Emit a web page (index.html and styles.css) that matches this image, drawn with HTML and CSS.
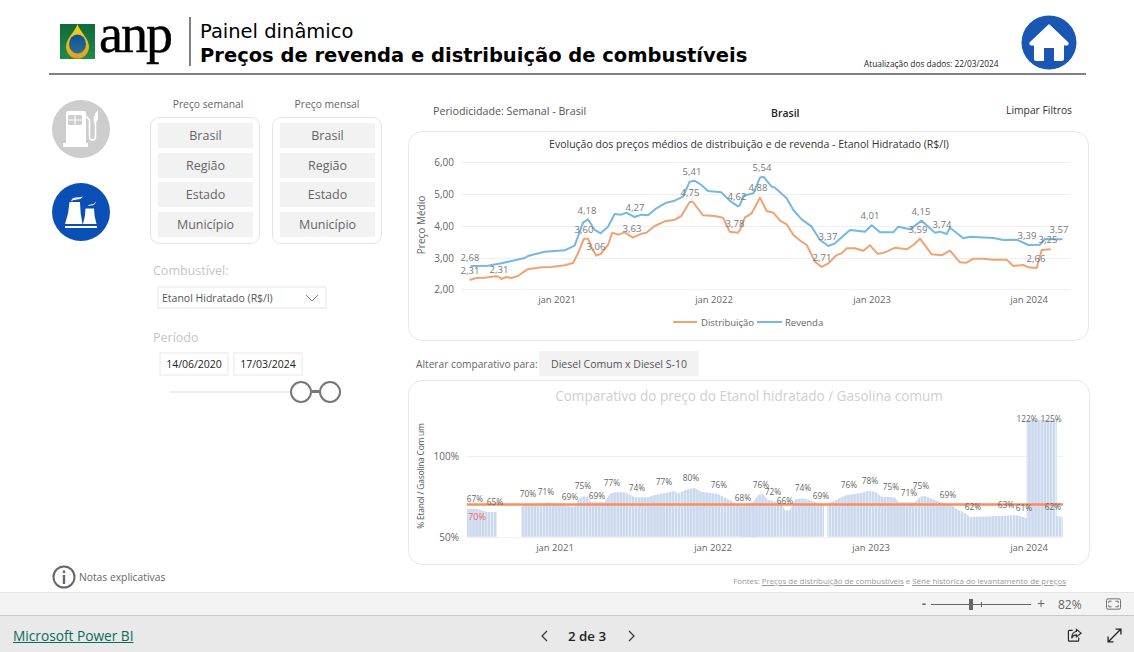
FILE: index.html
```html
<!DOCTYPE html>
<html lang="pt-BR">
<head>
<meta charset="utf-8">
<title>Painel dinâmico</title>
<link rel="stylesheet" href="styles.css">
</head>
<body>
<div class="report">
  <header class="top">
    <svg class="flag" viewBox="0 0 35 35" aria-hidden="true">
      <defs>
        <linearGradient id="gGreen" x1="0" y1="0" x2="0" y2="1"><stop offset="0" stop-color="#0f6b38"/><stop offset="1" stop-color="#1f8a4a"/></linearGradient>
        <linearGradient id="gGold" x1="0" y1="0" x2="0" y2="1"><stop offset="0" stop-color="#f4d21f"/><stop offset="1" stop-color="#e0a020"/></linearGradient>
        <linearGradient id="gBlue" x1="0" y1="0" x2="0" y2="1"><stop offset="0" stop-color="#0d4f96"/><stop offset="1" stop-color="#2d6f90"/></linearGradient>
      </defs>
      <rect width="35" height="35" fill="url(#gGreen)"/>
      <path d="M17.5 0C15 8 6 14 6 23a11.500 11.500 0 0 0 23 0C29 14 20 8 17.500 0z" fill="url(#gGold)"/>
      <ellipse cx="17.500" cy="20" rx="8.500" ry="9.500" fill="url(#gBlue)"/>
    </svg>
    <span class="anp">anp</span>
    <span class="divider"></span>
    <div class="titles">
      <div class="title-light">Painel dinâmico</div>
      <div class="title-bold">Preços de revenda e distribuição de combustíveis</div>
    </div>
    <span class="updated">Atualização dos dados: 22/03/2024</span>
    <svg class="home" viewBox="0 0 56 55" aria-hidden="true">
      <ellipse cx="28" cy="27.500" rx="27.500" ry="27" fill="#1a56b4"/>
      <path d="M28 9 L47 27 a2 2 0 0 1 -1.500 3.500 H43 V44 a2 2 0 0 1 -2 2 H33 V33 H23 V46 H15 a2 2 0 0 1 -2 -2 V30.500 H10.500 A2 2 0 0 1 9 27 Z" fill="#fff"/>
    </svg>
  </header>

  <div class="content">
    <aside class="side">
      <div class="side-top">
        <div class="rail">
          <svg class="round" viewBox="0 0 58 58" aria-hidden="true">
            <circle cx="29" cy="29" r="29" fill="#cdcdcd"/>
            <path d="M14 13 q0 -2 2 -2 h16 q2 0 2 2 v30 h2 v4 H11 v-4 h3 z" fill="#fff"/>
            <rect x="16" y="15" width="14" height="10" rx="1.500" fill="#cdcdcd"/>
            <path d="M23 15v10M16 20h14" stroke="#fff" stroke-width="1.200"/>
            <path d="M34 16 l3.500 4 v16 q0 4 3 4 t3 -4 V24 l-1 -2 v-6" fill="none" stroke="#fff" stroke-width="1.600"/>
            <path d="M44 23 l-2 -4 1.500 -6 2.500 -3 v9 z" fill="#fff"/>
          </svg>
          <svg class="round" viewBox="0 0 58 58" aria-hidden="true">
            <circle cx="29" cy="29" r="29" fill="#0a4fb5"/>
            <path d="M17.500 19 h10.500 q0 11 2.500 22 H13 q4 -11 4.500 -22z M33.500 25.500 h8.500 q0 8 2.500 15.500 H31 q2.500 -7.500 2.500 -15.500z" fill="#fff"/>
            <path d="M13 43 h32 v2 H13z" fill="#fff"/>
            <path d="M19 18.500 q1 -4 5 -4 t7 -1 q-2 3 -6 3 t-6 2z M35 24.500 q1 -3 4 -3 t5 -3 q-1 4 -5 4 t-4 2z" fill="#fff"/>
          </svg>
        </div>
        <div class="filters">
          <div class="filter-grid">
            <section class="filter-col">
              <div class="col-label">Preço semanal</div>
              <div class="btn-box">
                <div class="btn">Brasil</div><div class="btn">Região</div><div class="btn">Estado</div><div class="btn">Município</div>
              </div>
            </section>
            <section class="filter-col">
              <div class="col-label">Preço mensal</div>
              <div class="btn-box">
                <div class="btn">Brasil</div><div class="btn">Região</div><div class="btn">Estado</div><div class="btn">Município</div>
              </div>
            </section>
          </div>
          <div class="field-label first">Combustível:</div>
          <div class="select">
            <span>Etanol Hidratado (R$/l)</span>
            <svg class="chev" viewBox="0 0 14 8" aria-hidden="true"><path d="M1 1l6 6 6-6" fill="none" stroke="#777" stroke-width="1"/></svg>
          </div>
          <div class="field-label second">Período</div>
          <div class="dates"><div class="date">14/06/2020</div><div class="date">17/03/2024</div></div>
          <div class="slider">
            <span class="thumb"></span><span class="bridge"></span><span class="thumb"></span>
          </div>
        </div>
      </div>
      <div class="notes">
        <svg class="info" viewBox="0 0 24 24" aria-hidden="true">
          <circle cx="12" cy="12" r="10.500" fill="none" stroke="#666" stroke-width="2"/>
          <rect x="10.800" y="10" width="2.400" height="9" fill="#666"/><rect x="10.800" y="5.500" width="2.400" height="2.600" fill="#666"/>
        </svg>
        <span>Notas explicativas</span>
      </div>
    </aside>

    <main class="main">
      <div class="info-row">
        <span class="period">Periodicidade: Semanal - Brasil</span>
        <span class="region">Brasil</span>
        <span class="clear">Limpar Filtros</span>
      </div>

      <section class="card card-line">
        <svg class="chart" viewBox="409 132 679 208" role="img">
          <text class="t-title" x="749" y="148">Evolução dos preços médios de distribuição e de revenda - Etanol Hidratado (R$/l)</text>
          <g class="grid">
            <line x1="461" x2="1070" y1="162.500" y2="162.500"/><line x1="461" x2="1070" y1="194.500" y2="194.500"/>
            <line x1="461" x2="1070" y1="226.500" y2="226.500"/><line x1="461" x2="1070" y1="258.500" y2="258.500"/>
            <line x1="461" x2="1070" y1="289.500" y2="289.500"/>
          </g>
          <g class="axis-y">
            <text x="454" y="166">6,00</text><text x="454" y="198">5,00</text><text x="454" y="230">4,00</text><text x="454" y="262">3,00</text><text x="454" y="293">2,00</text>
          </g>
          <text class="axis-title" transform="translate(425 225) rotate(-90)">Preço Médio</text>
          <g class="axis-x">
            <text x="557" y="303">jan 2021</text><text x="714" y="303">jan 2022</text><text x="872" y="303">jan 2023</text><text x="1029" y="303">jan 2024</text>
          </g>
          <g transform="translate(408 130) scale(.33333)">
            <polyline class="l-blue" points="190,408 240,407 280,400 350,384 360,378 410,365 470,361 500,347 525,278 540,268 560,300 578,310 600,290 620,252 640,254 655,248 680,261 700,254 720,256 745,235 775,218 800,212 825,200 845,155 860,152 880,165 900,183 940,187 965,212 990,229 996,225"/>
            <polyline class="l-orange" points="187,449 205,444 230,443 262,439 272,440 280,447 295,441 310,444 330,438 358,418 400,412 430,411 470,406 495,399 510,370 528,326 540,326 552,355 565,377 578,372 600,345 613,308 630,314 650,307 675,323 700,311 715,308 740,288 770,274 800,269 820,258 845,216 855,216 885,256 920,258 945,263 965,305 990,308 996,300"/>
          </g>
          <g transform="translate(740 130) scale(.33333)">
            <polyline class="l-blue" points="0,225 10,197 40,190 60,143 70,140 95,170 105,173 140,205 160,240 185,268 215,290 240,330 265,348 285,340 330,300 375,305 395,286 420,307 460,307 475,290 510,298 545,272 585,308 600,305 620,312 630,293 670,325 690,320 760,324 790,330 830,329 865,345 900,344 915,327 965,328"/>
            <polyline class="l-orange" points="0,300 15,262 35,250 60,203 80,243 100,248 120,272 140,283 160,315 185,335 200,345 225,395 245,411 265,400 290,375 305,370 320,355 345,355 370,362 390,346 412,371 425,370 440,365 465,353 500,358 520,345 540,326 575,373 605,376 630,362 660,397 680,398 700,386 730,386 760,389 800,389 820,408 850,405 865,412 890,414 905,360 930,358"/>
          </g>
          <g class="labels">
            <text x="470" y="261">2,68</text><text x="470" y="274">2,31</text><text x="499" y="273">2,31</text>
            <text x="587" y="214">4,18</text><text x="584" y="233">3,60</text><text x="596" y="250">3,06</text>
            <text x="635" y="211">4,27</text><text x="632" y="232">3,63</text><text x="692" y="175">5,41</text>
            <text x="690" y="196">4,75</text><text x="737" y="200">4,62</text><text x="735" y="227">3,78</text>
            <text x="762" y="171">5,54</text><text x="758" y="191">4,88</text><text x="828" y="240">3,37</text>
            <text x="822" y="261">2,71</text><text x="870" y="219">4,01</text><text x="921" y="215">4,15</text>
            <text x="918" y="233">3,59</text><text x="942" y="228">3,74</text><text x="1027" y="239">3,39</text>
            <text x="1048" y="243">3,25</text><text x="1059" y="233">3,57</text><text x="1036" y="262">2,66</text>
          </g>
          <line class="leg-o" x1="673" x2="697" y1="322" y2="322"/>
          <text class="legend" x="701" y="326">Distribuição</text>
          <line class="leg-b" x1="757" x2="782" y1="322" y2="322"/>
          <text class="legend" x="785" y="326">Revenda</text>
        </svg>
      </section>

      <div class="compare-row">
        <span class="compare-label">Alterar comparativo para:</span>
        <span class="compare-btn">Diesel Comum x Diesel S-10</span>
      </div>

      <section class="card card-bars">
        <svg class="chart" viewBox="409 381 680 183" role="img">
          <defs>
            <pattern id="barsL" patternUnits="userSpaceOnUse" width="9.200" height="30"><rect width="7.800" height="30" fill="#cbd8ee"/><rect x="7.800" width="1.400" height="30" fill="#e6ecf7"/></pattern>
          </defs>
          <text class="t-title2" x="749" y="401">Comparativo do preço do Etanol hidratado / Gasolina comum</text>
          <g class="grid">
            <line x1="467" x2="1063" y1="456.500" y2="456.500"/><line x1="467" x2="1063" y1="537.500" y2="537.500"/>
          </g>
          <g class="axis-y2"><text x="459" y="460">100%</text><text x="459" y="541">50%</text></g>
          <text class="axis-title2" transform="translate(424 476) rotate(-90)">% Etanol / Gasolina Com um</text>
          <g transform="translate(408 345) scale(.33333)">
            <path fill="url(#barsL)" d="M177 575V491L205 491 225 497 240 501 267 501V575Z"/>
            <path fill="url(#barsL)" d="M340 575V486L350 480 400 476 420 472 470 482 500 485 513 460 525 454 540 455 550 472 590 472 605 447 620 442 650 442 680 457 720 457 740 450 800 438 810 446 830 436 860 428 880 440 930 447 965 465 1005 487 1030 482 1050 465V575Z"/>
          </g>
          <g transform="translate(740 345) scale(.33333)">
            <path fill="url(#barsL)" d="M54 575V450L68 447 85 465 125 473 135 497 150 495 165 463 190 460 230 472 252 482V575Z"/>
            <path fill="url(#barsL)" d="M0 575V485L40 470 54 450V575Z"/>
            <path fill="url(#barsL)" d="M262 575V475L290 465 300 458 320 450 360 445 385 437 405 440 425 455 465 457 475 472 525 472 540 455 555 453 590 467 640 483 650 492 680 507 690 516 780 513 830 511 860 520V225H950V513L968 516V575Z"/>
          </g>
          <line class="target" x1="467" x2="1063" y1="504.500" y2="504.500"/>
          <g class="pct">
            <text x="475" y="502">67%</text><text x="495" y="505">65%</text><text x="528" y="497">70%</text><text x="546" y="495">71%</text>
            <text x="570" y="500">69%</text><text x="583" y="489">75%</text><text x="597" y="499">69%</text><text x="612" y="486">77%</text>
            <text x="637" y="491">74%</text><text x="664" y="485">77%</text><text x="691" y="481">80%</text><text x="719" y="488">76%</text>
            <text x="743" y="501">68%</text><text x="761" y="488">76%</text><text x="773" y="495">72%</text><text x="785" y="504">66%</text>
            <text x="803" y="491">74%</text><text x="821" y="499">69%</text><text x="849" y="488">76%</text><text x="870" y="484">78%</text>
            <text x="891" y="490">75%</text><text x="909" y="496">71%</text><text x="921" y="489">75%</text><text x="948" y="498">69%</text>
            <text x="973" y="510">62%</text><text x="1006" y="508">63%</text><text x="1024" y="511">61%</text><text x="1027" y="422">122%</text>
            <text x="1051" y="422">125%</text><text x="1053" y="510">62%</text>
          </g>
          <text class="pct-red" x="477" y="520">70%</text>
          <g class="axis-x">
            <text x="555" y="551">jan 2021</text><text x="713" y="551">jan 2022</text><text x="871" y="551">jan 2023</text><text x="1029" y="551">jan 2024</text>
          </g>
        </svg>
      </section>

      <div class="sources">Fontes: <u>Preços de distribuição de combustíveis</u> e <u>Série histórica do levantamento de preços</u></div>
    </main>
  </div>
</div>

<div class="zoombar">
  <span class="z-minus">-</span>
  <span class="z-track"><span class="z-thumb"></span><span class="z-tick"></span></span>
  <span class="z-plus">+</span>
  <span class="z-pct">82%</span>
  <svg class="z-fit" viewBox="0 0 16 12" aria-hidden="true">
    <rect x=".5" y=".5" width="15" height="11" rx="1.500" fill="none" stroke="#666"/>
    <path d="M3 5V3h3M13 5V3h-3M3 7v2h3M13 7v2h-3" fill="none" stroke="#666"/>
  </svg>
</div>
<footer class="nav">
  <a class="pbi">Microsoft Power BI</a>
  <div class="pager">
    <svg class="pg-chev" viewBox="0 0 8 12" aria-hidden="true"><path d="M7 1L2 6l5 5" fill="none" stroke="#333" stroke-width="1.200"/></svg>
    <span class="pg-text">2 de 3</span>
    <svg class="pg-chev" viewBox="0 0 8 12" aria-hidden="true"><path d="M1 1l5 5-5 5" fill="none" stroke="#333" stroke-width="1.200"/></svg>
  </div>
  <svg class="act share" viewBox="0 0 16 16" aria-hidden="true">
    <path d="M6 2.500H2.500a1 1 0 0 0-1 1v9.500a1 1 0 0 0 1 1h9a1 1 0 0 0 1-1v-3" fill="none" stroke="#222" stroke-width="1.200"/>
    <path d="M10 1.500l5 4-5 4V7.300C7.500 7.300 6 8.500 5 11c0-4 1.800-6.800 5-7.200z" fill="none" stroke="#222" stroke-width="1.200"/>
  </svg>
  <svg class="act expand" viewBox="0 0 14 14" aria-hidden="true">
    <path d="M1 13L13 1M8 1h5v5M1 8v5h5" fill="none" stroke="#222" stroke-width="1.200"/>
  </svg>
</footer>
</body>
</html>
```
FILE: styles.css
```css
* { box-sizing: border-box; }
html, body { margin: 0; padding: 0; }
body { width: 1134px; height: 652px; overflow: hidden; background: #fff; font-family: "Open Sans", "Noto Sans", sans-serif; color: #555; display: flex; flex-direction: column; }

.report { height: 592px; display: flex; flex-direction: column; flex: none; }

.top { flex: none; height: 75px; width: 1037px; margin-left: 49px; border-bottom: 2px solid #808080; display: flex; align-items: flex-start; }
.flag { width: 35px; height: 35px; margin: 24px 0 0 11px; flex: none; }
.anp { font-family: "Liberation Serif", serif; font-size: 54px; line-height: 52px; letter-spacing: -2px; color: #000; margin: 8px 0 0 4px; width: 90px; flex: none; -webkit-text-stroke: 0.4px #000; }
.divider { width: 2px; height: 49px; background: #808080; margin-top: 17px; flex: none; }
.titles { margin: 20px 0 0 9px; width: 664px; flex: none; color: #000; font-family: "DejaVu Sans", sans-serif; }
.title-light { font-size: 19.500px; line-height: 24px; }
.title-bold { font-size: 19.500px; line-height: 23px; font-weight: 700; white-space: nowrap; }
.updated { font-size: 8.300px; color: #222; margin-top: 58px; width: 157px; flex: none; white-space: nowrap; line-height: 12px; }
.home { width: 56px; height: 55px; margin-top: 15px; flex: none; }

.content { flex: 1; display: flex; min-height: 0; }
.side { width: 359px; margin-left: 49px; flex: none; display: flex; flex-direction: column; }
.side-top { display: flex; }
.rail { width: 101px; padding: 25px 0 0 3px; display: flex; flex-direction: column; gap: 25px; flex: none; }
.round { width: 58px; height: 58px; display: block; }

.filters { width: 240px; flex: none; }
.filter-grid { display: flex; gap: 12px; }
.filter-col { width: 110px; }
.col-label { height: 42px; padding-top: 21px; text-align: center; font-size: 10.300px; line-height: 16px; color: #666; white-space: nowrap; }
.filter-col:first-child .col-label { padding-left: 6px; }
.btn-box { height: 127px; border: 1px solid #e4e4e4; border-radius: 9px; padding: 5px 6px 0 7px; display: grid; grid-auto-rows: 25px; row-gap: 4.500px; }
.btn { background: #f2f2f2; text-align: center; font-size: 12.500px; line-height: 25px; color: #666; }

.field-label { font-size: 12.500px; line-height: 18px; color: #c6c6c6; margin-left: 3px; }
.field-label.first { margin-top: 18px; }
.field-label.second { margin-top: 20px; }
.select { width: 170px; height: 23px; margin: 6px 0 0 7px; border: 2px solid #f3f3f3; display: flex; align-items: center; justify-content: space-between; padding: 0 6px 0 3px; font-size: 10.500px; color: #555; white-space: nowrap; }
.chev { width: 14px; height: 8px; }
.dates { display: flex; gap: 4px; margin: 5px 0 0 9px; }
.date { width: 70px; height: 24px; border: 2px solid #f3f3f3; font-size: 10.500px; line-height: 20px; text-align: center; color: #222; }
.slider { position: relative; height: 2px; width: 140px; margin: 15px 0 0 20px; background: #eee; }
.thumb { position: absolute; top: -10px; width: 22px; height: 22px; border: 2px solid #777; border-radius: 50%; background: #fff; }
.thumb:first-child { left: 120px; }
.thumb:last-child { left: 149px; }
.bridge { position: absolute; top: -1px; left: 142px; width: 7px; height: 3px; background: #777; }

.notes { margin: auto 0 3px 3px; height: 24px; display: flex; align-items: center; gap: 3px; font-size: 10.300px; color: #666; white-space: nowrap; }
.info { width: 24px; height: 24px; flex: none; }

.main { width: 682px; flex: none; display: flex; flex-direction: column; }
.info-row { height: 56px; display: grid; grid-template-columns: 338px 30px 1fr; padding: 26px 18px 0 25px; font-size: 10.500px; color: #444; white-space: nowrap; }
.period { line-height: 20px; color: #555; font-size: 10.700px; }
.region { line-height: 24px; color: #222; font-weight: 600; }
.clear { line-height: 18px; text-align: right; color: #333; font-size: 10.300px; }

.card { border: 1px solid #e8e8e8; border-radius: 14px; overflow: hidden; }
.card-line { width: 681px; height: 210px; }
.card-bars { width: 682px; height: 185px; }
.chart { display: block; width: 100%; height: 100%; }

.compare-row { height: 39px; padding: 10px 0 0 8px; display: flex; align-items: flex-start; font-size: 10.500px; }
.compare-label { line-height: 27px; width: 123px; flex: none; color: #666; white-space: nowrap; font-size: 10.200px; }
.compare-btn { width: 160px; height: 25px; line-height: 26px; text-align: center; background: #f2f2f2; color: #555; white-space: nowrap; }

.sources { padding-right: 24px; margin-top: 9px; text-align: right; font-size: 7.850px; line-height: 14px; color: #999; white-space: nowrap; }

.t-title { font-size: 10.500px; fill: #333; text-anchor: middle; }
.t-title2 { font-size: 13.550px; fill: #cfcfcf; text-anchor: middle; }
.grid line { stroke: #efefef; stroke-width: 1; }
.axis-y text { font-size: 10px; fill: #666; text-anchor: end; }
.axis-y2 text { font-size: 10px; fill: #666; text-anchor: end; }
.axis-x text { font-size: 9.500px; fill: #666; text-anchor: middle; }
.axis-title { font-size: 10px; fill: #666; text-anchor: middle; }
.axis-title2 { font-size: 8.500px; letter-spacing: -0.25px; fill: #555; text-anchor: middle; }
.labels text { font-size: 9.500px; fill: #777; text-anchor: middle; }
.pct text { font-size: 8.300px; fill: #666; text-anchor: middle; }
.pct-red { font-size: 9px; fill: #f46a5e; text-anchor: middle; }
.legend { font-size: 9.500px; fill: #666; }
.l-blue, .l-orange { fill: none; stroke-width: 6; stroke-linejoin: round; stroke-linecap: round; }
.l-blue { stroke: #74b7e2; }
.l-orange { stroke: #f2a272; }
.leg-o { stroke: #f2a272; stroke-width: 2; }
.leg-b { stroke: #74b7e2; stroke-width: 2; }
.target { stroke: #f98e5e; stroke-width: 2.500; }

.zoombar { flex: none; height: 23px; border-top: 1px solid #e3e3e3; background: #f3f3f3; display: flex; align-items: center; position: relative; font-size: 12px; color: #666; }
.z-minus { margin-left: 922px; width: 9px; font-weight: 700; line-height: 16px; }
.z-track { width: 100px; height: 1px; background: #666; position: relative; }
.z-thumb { position: absolute; left: 38px; top: -5px; width: 4px; height: 11px; background: #666; }
.z-tick { position: absolute; left: 50px; top: -2px; width: 1px; height: 5px; background: #666; }
.z-plus { margin-left: 6px; width: 21px; font-size: 14px; line-height: 16px; }
.z-pct { width: 48px; }
.z-fit { width: 15px; height: 12px; }

.nav { flex: none; height: 37px; padding-top: 3px; border-top: 1px solid #c8c8c8; background: #e9e9e9; display: flex; align-items: center; }
.pbi { margin-left: 13px; width: 527px; font-size: 13.700px; color: #0b6a60; text-decoration: underline; flex: none; white-space: nowrap; }
.pager { display: flex; align-items: center; gap: 20px; font-size: 13.300px; font-weight: 600; color: #222; width: 100px; flex: none; white-space: nowrap; }
.pg-text { margin-right: 2px; }
.pg-chev { width: 8px; height: 12px; }
.share { margin-left: 427px; }
.act { width: 15px; height: 15px; flex: none; }
.expand { margin-left: 25px; }
```
